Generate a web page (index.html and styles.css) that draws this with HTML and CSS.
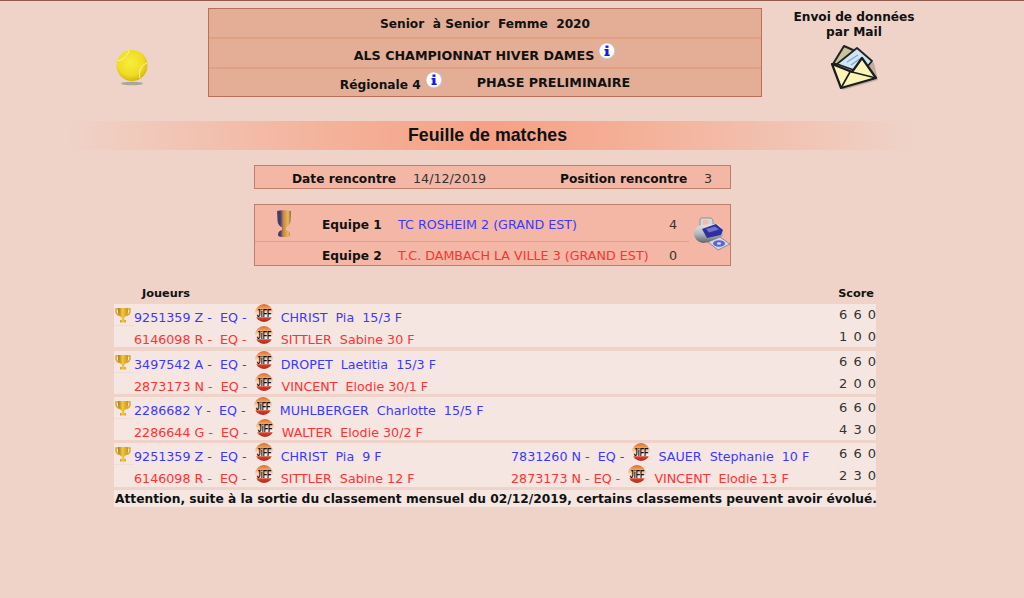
FILE: index.html
```html
<!DOCTYPE html>
<html lang="fr">
<head>
<meta charset="utf-8">
<title>Feuille de matches</title>
<link rel="stylesheet" href="styles.css">
</head>
<body>
<svg class="defs" width="0" height="0" aria-hidden="true">
  <defs>
    <radialGradient id="ballGrad" cx="0.45" cy="0.4" r="0.6">
      <stop offset="0" stop-color="#f7ee3e"/><stop offset="0.7" stop-color="#f0dc22"/><stop offset="1" stop-color="#d8b612"/>
    </radialGradient>
    <linearGradient id="jiffGrad" x1="0" y1="0" x2="0" y2="1">
      <stop offset="0" stop-color="#d86a2a"/><stop offset="0.25" stop-color="#f0a060"/><stop offset="0.5" stop-color="#f6dcc8"/><stop offset="0.72" stop-color="#f8f2ec"/><stop offset="0.76" stop-color="#d8402a"/><stop offset="1" stop-color="#a82a1c"/>
    </linearGradient>
    <linearGradient id="cupGrad" x1="0" y1="0" x2="1" y2="0">
      <stop offset="0" stop-color="#a9781f"/><stop offset="0.45" stop-color="#f2c83a"/><stop offset="1" stop-color="#c89420"/>
    </linearGradient>
    <linearGradient id="bigCup" x1="0" y1="0" x2="1" y2="0">
      <stop offset="0" stop-color="#5c4c3e"/><stop offset="0.22" stop-color="#34348c"/><stop offset="0.45" stop-color="#c8883a"/><stop offset="0.8" stop-color="#e8b860"/><stop offset="1" stop-color="#7c5e3a"/>
    </linearGradient>
    <linearGradient id="prnBody" x1="0" y1="0" x2="0" y2="1">
      <stop offset="0" stop-color="#e6e8ea"/><stop offset="0.5" stop-color="#b4babe"/><stop offset="1" stop-color="#5e666a"/>
    </linearGradient>
    <symbol id="jiff" viewBox="0 0 18 18">
      <circle cx="9" cy="9" r="9" fill="url(#jiffGrad)"/>
      <text x="9" y="12.800" class="jifftext" text-anchor="middle" textLength="14.500" lengthAdjust="spacingAndGlyphs">JiFF</text>
    </symbol>
    <symbol id="cup" viewBox="0 0 16 17">
      <path d="M3 2H1v2.500C1 7 3 8 4.500 8.500M13 2h2v2.500C15 7 13 8 11.500 8.500" fill="none" stroke="#d8a92c" stroke-width="1.500"/>
      <path d="M3 1h10v4c0 3-2.500 5-3.800 5.500V13H11v2.500H5V13h1.800v-2.500C5.500 10 3 8 3 5z" fill="url(#cupGrad)"/>
    </symbol>
    <symbol id="info" viewBox="0 0 18 18">
      <path d="M5 13l4.500 5 3-5z" fill="#b9b7b4"/>
      <circle cx="9" cy="8" r="8" fill="#c8d0e0"/>
      <circle cx="8.800" cy="7.800" r="7.300" fill="#fff"/>
      <rect x="7.500" y="2.500" width="3" height="2.400" fill="#1a1ae8"/>
      <path d="M6.500 6h4v5.500h1.200V13H6.500v-1.500h1V7.400h-1z" fill="#1a1ae8"/>
    </symbol>
  </defs>
</svg>

<header class="top">
  <div class="ball-col">
    <svg class="ball" viewBox="0 0 32 36" aria-hidden="true">
      <ellipse cx="16" cy="33.500" rx="11" ry="1.800" fill="#a9a6a0"/>
      <circle cx="16" cy="15.500" r="15.500" fill="url(#ballGrad)"/>
      <path d="M2 11C8 9 12 5 13 .5M24 28c-2-6 1-13 7-15" fill="none" stroke="#faf6a0" stroke-width="1"/>
    </svg>
  </div>
  <div class="head-box">
    <div class="head-row">Senior&nbsp; à Senior&nbsp; Femme&nbsp; 2020</div>
    <div class="head-row">
      <span class="lower caps">ALS CHAMPIONNAT HIVER DAMES</span>
      <svg class="info" aria-hidden="true"><use href="#info"/></svg>
    </div>
    <div class="head-row head-last">
      <span class="lower">Régionale 4</span>
      <svg class="info" aria-hidden="true"><use href="#info"/></svg>
      <span class="phase caps">PHASE PRELIMINAIRE</span>
    </div>
  </div>
  <div class="mail-col">
    <div class="mail-title">Envoi de données<br>par Mail</div>
    <svg class="mail" viewBox="0 0 50 48" aria-hidden="true">
      <path d="M2 20 14 2l8 3 5-1 15 13 4 17-35 10z" fill="#6d6258" opacity=".35" transform="translate(2 2)"/>
      <path d="M3 20 14 2l9 4 4 14z" fill="#c9c49a" stroke="#222" stroke-width="2" stroke-linejoin="round"/>
      <path d="M7 20 27 4l15 13-10 12z" fill="#cfe6f4" stroke="#222" stroke-width="1.800" stroke-linejoin="round"/>
      <path d="M17 18l11-7M21 21l10-7" stroke="#7ea6c8" stroke-width="1.200"/>
      <path d="M2 20 22 28 32 14l14 20-35 10z" fill="#fbf4b8" stroke="#1c1c1c" stroke-width="2.200" stroke-linejoin="round"/>
      <path d="M11 44 20 28M22 28 46 34" fill="none" stroke="#1c1c1c" stroke-width="1.600"/>
    </svg>
  </div>
</header>

<h1 class="band">Feuille de matches</h1>

<section class="box date-box">
  <b class="date-label">Date rencontre</b>
  <span class="date-value">14/12/2019</span>
  <b class="pos-label">Position rencontre</b>
  <span class="pos-value">3</span>
</section>

<section class="box team-box">
  <div class="teams">
    <div class="team-row first">
      <div class="team-cup">
        <svg class="bigcup" viewBox="0 0 16 27" aria-hidden="true">
          <path d="M1 1c3-1 11-1 14 0l-.5 10c-.5 4-3 5.500-4.500 6.500v2.500c2 .5 4 2 4 4.500 0 2-2 2.500-6 2.500S2 27 2 24.500C2 22 4 20.500 6 20v-2.500C4.500 16.500 2 15 1.500 11z" fill="url(#bigCup)"/>
        </svg>
      </div>
      <b class="team-label">Equipe 1</b>
      <span class="team-name blue">TC ROSHEIM 2 (GRAND EST)</span>
      <span class="team-score">4</span>
    </div>
    <div class="team-row">
      <div class="team-cup"></div>
      <b class="team-label">Equipe 2</b>
      <span class="team-name red">T.C. DAMBACH LA VILLE 3 (GRAND EST)</span>
      <span class="team-score">0</span>
    </div>
  </div>
  <svg class="printer" viewBox="0 0 36 36" aria-hidden="true">
    <path d="M7 3h10l2 2v8H6V4z" fill="#d4d8d8" stroke="#7f888a" stroke-width=".8"/>
    <rect x="9" y="5" width="5" height="6" fill="#f1bda9"/>
    <path d="M0 18c0-4 3-7 8-8l14-1c3 0 5 2 6 5l1 6-6 6-14 2c-6-1-9-5-9-10z" fill="url(#prnBody)"/>
    <path d="M8 14l14-5 7 6-2 5-14 3z" fill="#30309c"/>
    <path d="M12 14l9-2.500 4 3-10 3z" fill="#7272d0"/>
    <path d="M14 27l12-5 10 7-12 6z" fill="#d4d8dc" stroke="#6e767a" stroke-width=".7"/>
    <ellipse cx="25" cy="28.500" rx="6" ry="3.200" fill="#5f5fd8"/>
    <ellipse cx="25" cy="28.500" rx="2.200" ry="1.300" fill="#d8d8f8"/>
  </svg>
</section>

<section class="matches">
  <div class="m-head"><b>Joueurs</b><b>Score</b></div>

  <div class="group">
    <div class="cup-cell"><svg class="cup" aria-hidden="true"><use href="#cup"/></svg></div>
    <div class="line blue">9251359 Z -  <span class="eq">EQ -  <svg class="j" aria-hidden="true"><use href="#jiff"/></svg>  CHRIST  Pia  15/3 F</span></div>
    <div class="sc">6 6 0</div>
    <div class="cup-empty"></div>
    <div class="line red">6146098 R -  <span class="eq">EQ -  <svg class="j" aria-hidden="true"><use href="#jiff"/></svg>  SITTLER  Sabine 30 F</span></div>
    <div class="sc">1 0 0</div>
  </div>

  <div class="group">
    <div class="cup-cell"><svg class="cup" aria-hidden="true"><use href="#cup"/></svg></div>
    <div class="line blue">3497542 A -  <span class="eq">EQ -  <svg class="j" aria-hidden="true"><use href="#jiff"/></svg>  DROPET  Laetitia  15/3 F</span></div>
    <div class="sc">6 6 0</div>
    <div class="cup-empty"></div>
    <div class="line red">2873173 N -  <span class="eq">EQ -  <svg class="j" aria-hidden="true"><use href="#jiff"/></svg>  VINCENT  Elodie 30/1 F</span></div>
    <div class="sc">2 0 0</div>
  </div>

  <div class="group">
    <div class="cup-cell"><svg class="cup" aria-hidden="true"><use href="#cup"/></svg></div>
    <div class="line blue">2286682 Y -  <span class="eq">EQ -  <svg class="j" aria-hidden="true"><use href="#jiff"/></svg>  MUHLBERGER  Charlotte  15/5 F</span></div>
    <div class="sc">6 6 0</div>
    <div class="cup-empty"></div>
    <div class="line red">2286644 G -  <span class="eq">EQ -  <svg class="j" aria-hidden="true"><use href="#jiff"/></svg>  WALTER  Elodie 30/2 F</span></div>
    <div class="sc">4 3 0</div>
  </div>

  <div class="group double">
    <div class="cup-cell"><svg class="cup" aria-hidden="true"><use href="#cup"/></svg></div>
    <div class="line blue">9251359 Z -  <span class="eq">EQ -  <svg class="j" aria-hidden="true"><use href="#jiff"/></svg>  CHRIST  Pia  9 F</span></div>
    <div class="line blue">7831260 N -  <span class="eq">EQ -  <svg class="j" aria-hidden="true"><use href="#jiff"/></svg>  SAUER  Stephanie  10 F</span></div>
    <div class="sc">6 6 0</div>
    <div class="cup-empty"></div>
    <div class="line red">6146098 R -  <span class="eq">EQ -  <svg class="j" aria-hidden="true"><use href="#jiff"/></svg>  SITTLER  Sabine 12 F</span></div>
    <div class="line red">2873173 N - <span class="eq">EQ -  <svg class="j" aria-hidden="true"><use href="#jiff"/></svg>  VINCENT  Elodie 13 F</span></div>
    <div class="sc">2 3 0</div>
  </div>

  <p class="note">Attention, suite à la sortie du classement mensuel du 02/12/2019, certains classements peuvent avoir évolué.</p>
</section>
</body>
</html>
```

FILE: styles.css
```css
* { box-sizing: border-box; }
html, body { margin: 0; padding: 0; }
body {
  height: 598px;
  overflow: hidden;
  background: #efd3c8;
  border-top: 1px solid #8f5b4b;
  font-family: "DejaVu Sans", Verdana, sans-serif;
  font-size: 12.7px;
  color: #333;
}
b { font-size: 12.2px; }
.defs { display: block; height: 0; width: 0; overflow: hidden; }
.jifftext { font-family: "Liberation Sans", sans-serif; font-weight: bold; font-size: 10.500px; fill: #111; }
.blue { color: #3a3aff; }
.red { color: #ff3232; }

.top { display: flex; align-items: flex-start; height: 96px; padding-top: 7px; }
.ball-col { width: 208px; padding: 42px 0 0 116px; }
.ball { display: block; width: 32px; height: 36px; }
.head-box {
  width: 554px; height: 89px;
  background: #e4ae96;
  border: 1px solid #b9705a;
  display: flex; flex-direction: column;
  font-weight: bold; font-size: 12.2px; color: #111;
}
.head-row {
  height: 30px;
  padding-top: 2px;
  display: flex; align-items: center; justify-content: center;
  border-bottom: 2px solid #e19f84;
  white-space: pre;
}
.head-last { border-bottom: 0; height: 27px; }
.lower { position: relative; top: 1px; }
.caps { font-size: 12.700px; }
.info { width: 18px; height: 18px; margin-left: 4px; position: relative; top: -2px; }
.head-last .info { top: -3px; }
.phase { margin-left: 34px; position: relative; top: -1px; }
.mail-col { width: 184px; display: flex; flex-direction: column; align-items: center; }
.mail-title { text-align: center; font-weight: bold; font-size: 12.2px; color: #111; line-height: 15px; margin-top: 2px; }
.mail { width: 50px; height: 48px; margin: 4px 0 0 2px; display: block; }

.band {
  width: 850px; height: 29px;
  margin: 24px 0 15px 65px;
  background: linear-gradient(90deg, rgba(246,166,138,0) 0%, #f4b39c 30%, #f6a085 50%, #f4b39c 70%, rgba(246,166,138,0) 100%);
  font: bold 17.800px/28px "Liberation Sans", Arial, sans-serif;
  color: #111;
  text-align: center;
  padding-right: 5px;
}

.box {
  width: 477px;
  margin-left: 254px;
  background: #f4b7a5;
  border: 1px solid #bd7f69;
}
.date-box { height: 24px; display: flex; align-items: baseline; padding-top: 5px; margin-bottom: 15px; }
.date-box b, .team-label { color: #111; }
.date-label { margin-left: 37px; width: 121px; }
.date-value { width: 147px; }
.pos-label { width: 144px; }
.team-box { height: 62px; display: flex; }
.teams { width: 434px; display: flex; flex-direction: column; }
.team-row { display: flex; align-items: baseline; height: 23px; padding-top: 6px; }
.team-row.first { height: 38px; padding-top: 12px; border-bottom: 1px solid #e19f84; }
.team-cup { width: 67px; padding-left: 21px; align-self: flex-start; }
.bigcup { display: block; width: 16px; height: 27px; margin-top: -7px; }
.team-label { width: 76px; font-weight: bold; }
.team-name { width: 271px; }
.printer { width: 36px; height: 36px; margin: 10px 0 0 5px; }

.matches { width: 762px; margin: 19px 0 0 114px; }
.m-head { display: flex; justify-content: space-between; height: 19px; padding: 0 2px 0 28px; line-height: 18px; color: #111; }
.m-head b { font-size: 11.300px; }
.group {
  display: grid;
  grid-template-columns: 20px 1fr 37px;
  grid-template-rows: 22px 21px;
  background: #f6e6e2;
  margin-bottom: 3px;
}
.m-head + .group { margin-bottom: 4px; }
.group.double { grid-template-columns: 20px 377px 1fr 37px; grid-template-rows: 22px 22px; }
.cup-cell { border-bottom: 1px solid #efdcd4; padding: 3px 0 0 1px; }
.cup { display: block; width: 16px; height: 17px; }
.line { white-space: pre; line-height: 18px; height: 22px; }
.j { width: 18px; height: 18px; vertical-align: baseline; }
.sc { color: #333; font-size: 13px; white-space: pre; line-height: 21px; word-spacing: 2px; }
.note {
  margin: 0; height: 17px;
  background: #f6e6e2;
  font-weight: bold; color: #111; font-size: 12.250px; line-height: 19px;
  white-space: nowrap; padding-left: 1px;
}
```
